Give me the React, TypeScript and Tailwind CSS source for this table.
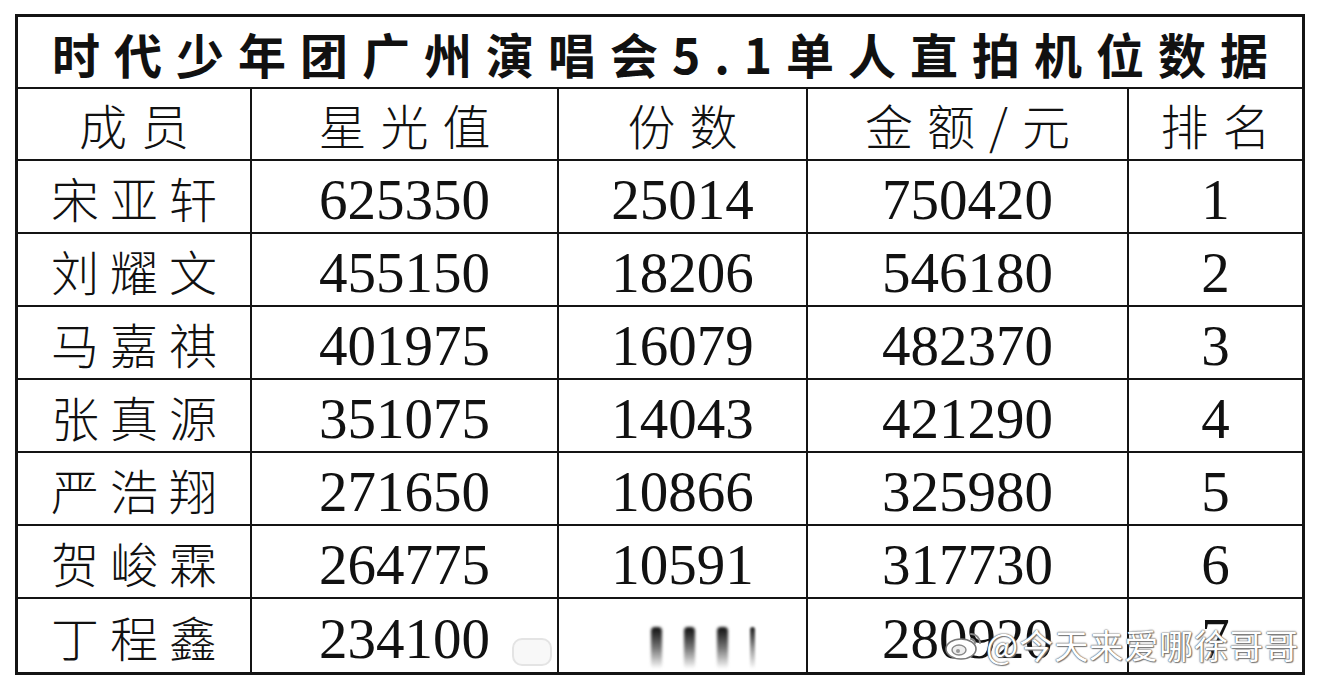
import React from 'react';

const rows = [
  { name: '宋亚轩', stars: '625350', count: '25014', amount: '750420', rank: '1' },
  { name: '刘耀文', stars: '455150', count: '18206', amount: '546180', rank: '2' },
  { name: '马嘉祺', stars: '401975', count: '16079', amount: '482370', rank: '3' },
  { name: '张真源', stars: '351075', count: '14043', amount: '421290', rank: '4' },
  { name: '严浩翔', stars: '271650', count: '10866', amount: '325980', rank: '5' },
  { name: '贺峻霖', stars: '264775', count: '10591', amount: '317730', rank: '6' },
  { name: '丁程鑫', stars: '234100', count: '', amount: '280920', rank: '7' },
];

const headers = ['成员', '星光值', '份数', '金额/元', '排名'];

const cjk = "font-['Noto_Sans_CJK_SC',sans-serif]";
const num = "font-['Liberation_Serif','Noto_Sans_CJK_SC',serif]";

// blurred-out number in the last row
const Smudge: React.FC = () => (
  <div className="flex items-start gap-[22px] pt-[22px] pl-[40px] h-full">
    <div className="w-[11px] h-[42px] rounded-sm bg-gradient-to-b from-[#111] via-[#777] to-transparent blur-[1.5px]" />
    <div className="w-[11px] h-[42px] rounded-sm bg-gradient-to-b from-[#111] via-[#777] to-transparent blur-[1.5px]" />
    <div className="w-[11px] h-[42px] rounded-sm bg-gradient-to-b from-[#111] via-[#777] to-transparent blur-[1.5px]" />
    <div className="w-[5px] h-[42px] rounded-sm bg-gradient-to-b from-[#222] via-[#999] to-transparent blur-[1px]" />
  </div>
);

const WeiboLogo: React.FC = () => (
  <svg width="40" height="34" viewBox="0 0 40 34" fill="none">
    <ellipse cx="17" cy="21" rx="15" ry="10" fill="#fff" stroke="#777" strokeWidth="1.6" />
    <ellipse cx="15" cy="22" rx="7" ry="5" fill="#eee" stroke="#888" strokeWidth="1.4" />
    <circle cx="14" cy="23" r="2" fill="#999" />
    <path d="M27 6 a9 9 0 0 1 9 9" stroke="#888" strokeWidth="2" strokeLinecap="round" />
    <path d="M27 11 a4 4 0 0 1 4 4" stroke="#888" strokeWidth="2" strokeLinecap="round" />
  </svg>
);

const App: React.FC = () => {
  return (
    <div className="relative w-[1320px] h-[682px] bg-white text-[#111] overflow-hidden">
      <div className="ml-[15px] pt-[14px]">
        <div className="w-[1290px] border-[3px] border-[#141414]">
          {/* Title */}
          <div
            className={`h-[72px] border-b-2 border-[#141414] flex items-center justify-center ${cjk} font-bold text-[48px] tracking-[14px] pl-[14px] pt-[2px]`}
          >
            时代少年团广州演唱会5.1单人直拍机位数据
          </div>

          {/* Table */}
          <div className="grid grid-cols-[234px_307px_249px_321px_173px]">
            {headers.map((h, i) => (
              <div
                key={h}
                className={`h-[72px] border-b-2 border-[#141414] ${i < 4 ? 'border-r-2' : ''} flex items-center justify-center ${cjk} font-light text-[48px] tracking-[14px] pl-[14px]`}
              >
                {h}
              </div>
            ))}

            {rows.map((r, ri) => {
              const last = ri === rows.length - 1;
              const cell = `h-[73px] ${last ? '' : 'border-b-2'} border-[#141414] flex items-center justify-center`;
              return (
                <React.Fragment key={r.name}>
                  <div className={`${cell} border-r-2 ${cjk} font-light text-[48px] tracking-[11px] pl-[11px]`}>
                    {r.name}
                  </div>
                  <div className={`${cell} border-r-2 ${num} text-[57px] pt-[6px]`}>{r.stars}</div>
                  <div className={`${cell} border-r-2 ${num} text-[57px] pt-[6px]`}>
                    {r.count ? r.count : <Smudge />}
                  </div>
                  <div className={`${cell} border-r-2 ${num} text-[57px] pt-[6px]`}>{r.amount}</div>
                  <div className={`${cell} ${num} text-[57px] pt-[6px]`}>{r.rank}</div>
                </React.Fragment>
              );
            })}
          </div>
        </div>
      </div>

      {/* erased watermark box */}
      <div className="absolute left-[512px] top-[638px] w-[40px] h-[28px] rounded-[10px] border-2 border-[#e4e4e4] bg-[#f6f6f6]/80" />

      {/* Weibo watermark */}
      <div className="absolute left-[944px] top-[628px] flex items-center gap-[2px]">
        <WeiboLogo />
        <span
          className={`${cjk} text-[34px] leading-none text-white tracking-[1px] [text-shadow:0_0_1px_#444,0_0_2px_#666,1px_1px_1px_#888]`}
        >
          @今天来爱哪徐哥哥
        </span>
      </div>
    </div>
  );
};

export default App;
